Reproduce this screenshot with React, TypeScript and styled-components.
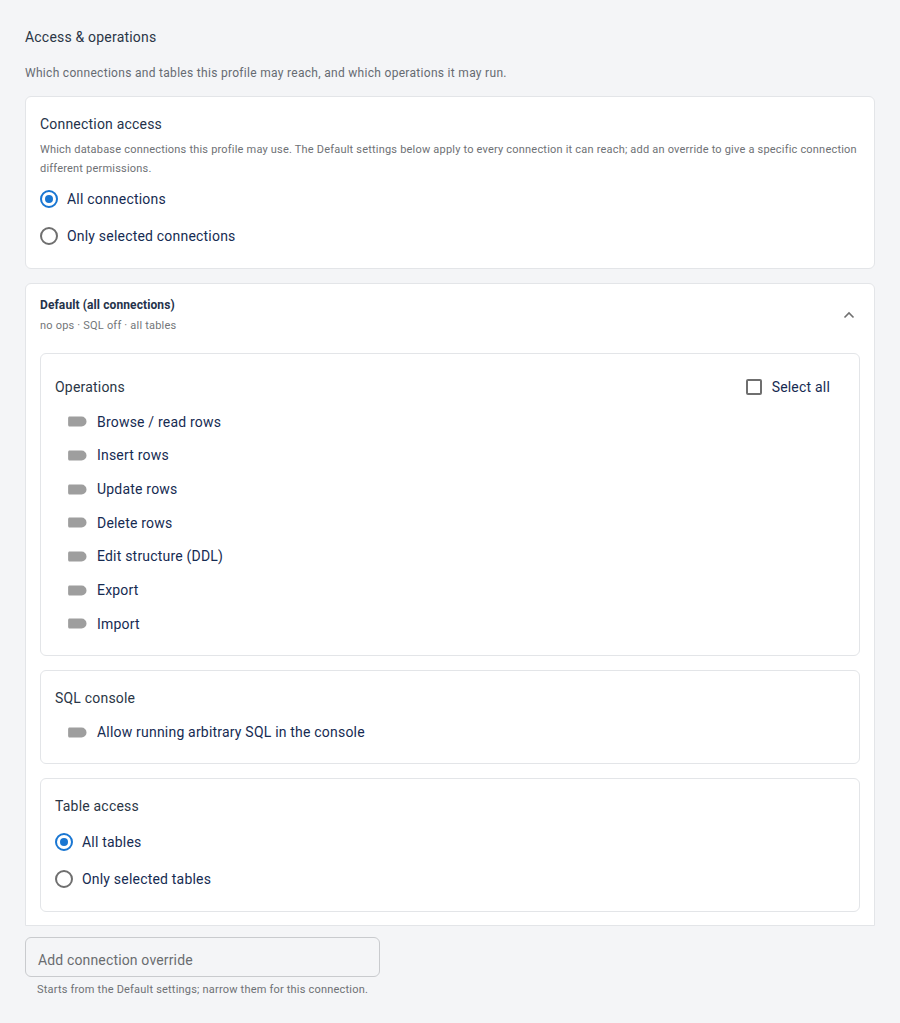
import React from "react";
import styled, { createGlobalStyle } from "styled-components";

const Global = createGlobalStyle`
  html, body { margin: 0; padding: 0; background: #f4f5f7; }
  body { font-family: Roboto, "Noto Sans", "Liberation Sans", sans-serif; -webkit-font-smoothing: antialiased; }
  * { box-sizing: border-box; }
`;

const Page = styled.div`
  padding: 27px 25px 26px 25px;
  width: 900px;
  min-height: 1023px;
`;

const Heading = styled.div`
  font-size: 14px;
  line-height: 20px;
  color: #2b3646;
  letter-spacing: 0.2px;
`;

const Sub = styled.div`
  margin-top: 17px;
  font-size: 12px;
  line-height: 18px;
  color: #666b72;
  letter-spacing: 0.3px;
`;

const Card = styled.div<{ $openBottom?: boolean }>`
  background: #fff;
  border: 1px solid #e3e5e8;
  border-radius: ${(p) => (p.$openBottom ? "6px 6px 0 0" : "6px")};
  width: 850px;
`;

const AccessCard = styled(Card)`
  margin-top: 14px;
  padding: 17px 14px 14px 14px;
`;

const CardTitle = styled.div`
  font-size: 14px;
  line-height: 20px;
  color: #25324a;
  letter-spacing: 0.2px;
`;

const Desc = styled.div`
  margin-top: 7px;
  font-size: 11px;
  line-height: 18.5px;
  color: #6e7175;
  letter-spacing: 0.2px;
`;

const RadioGroup = styled.div<{ $top: number }>`
  display: flex;
  flex-direction: column;
  margin-top: ${(p) => p.$top}px;
`;

const RadioRow = styled.label`
  display: flex;
  align-items: center;
  height: 37px;
  gap: 9px;
  cursor: pointer;
`;

const RadioCircle = styled.span<{ $on?: boolean }>`
  width: 18px;
  height: 18px;
  border-radius: 50%;
  border: 2px solid ${(p) => (p.$on ? "#1976d2" : "#6f6f6f")};
  display: flex;
  align-items: center;
  justify-content: center;
  flex-shrink: 0;
  &::after {
    content: "";
    width: 8px;
    height: 8px;
    border-radius: 50%;
    background: ${(p) => (p.$on ? "#1976d2" : "transparent")};
  }
`;

const OptionText = styled.span`
  font-size: 14px;
  line-height: 20px;
  color: #162b52;
  letter-spacing: 0.2px;
`;

const DefaultCard = styled(Card)`
  margin-top: 14px;
  padding-bottom: 13px;
`;

const DefaultHeader = styled.div`
  display: flex;
  align-items: center;
  justify-content: space-between;
  padding: 12px 18px 19px 14px;
`;

const HeaderTitle = styled.div`
  font-size: 12px;
  line-height: 18px;
  font-weight: 700;
  color: #25324a;
  letter-spacing: 0.1px;
`;

const HeaderSub = styled.div`
  margin-top: 4px;
  font-size: 11px;
  line-height: 16px;
  color: #737679;
  letter-spacing: 0.2px;
`;

const Body = styled.div`
  display: flex;
  flex-direction: column;
  gap: 14px;
  padding: 0 14px;
`;

const Panel = styled.div`
  border: 1px solid #e3e5e8;
  border-radius: 6px;
  padding: 15px 15px 14px 14px;
`;

const PanelHeader = styled.div`
  display: flex;
  align-items: center;
  justify-content: space-between;
  height: 36px;
`;

const PanelTitle = styled.div<{ $gap?: number }>`
  font-size: 14px;
  line-height: 24px;
  color: #2b3646;
  letter-spacing: 0.2px;
  margin-bottom: ${(p) => p.$gap ?? 0}px;
`;

const CheckLabel = styled.label`
  display: flex;
  align-items: center;
  gap: 10px;
  margin-right: 14px;
  cursor: pointer;
`;

const CheckBox = styled.span`
  width: 16px;
  height: 16px;
  border: 2px solid #6f6f6f;
  border-radius: 2px;
`;

const ToggleRow = styled.div`
  display: flex;
  align-items: center;
  height: 33.67px;
  padding-left: 13px;
  gap: 10px;
`;

const ToggleTrack = styled.svg`
  width: 19px;
  height: 11px;
  flex-shrink: 0;
`;

const InputBox = styled.div`
  margin-top: 11px;
  width: 355px;
  height: 40px;
  border: 1px solid #c9cbce;
  border-radius: 6px;
  display: flex;
  align-items: center;
  padding: 6px 0 0 12px;
  font-size: 14px;
  color: #6a6d70;
  letter-spacing: 0.15px;
`;

const Helper = styled.div`
  margin-top: 5px;
  padding-left: 12px;
  font-size: 11px;
  line-height: 16px;
  color: #6e7175;
  letter-spacing: 0.2px;
`;

const Toggle = ({ label }: { label: string }) => (
  <ToggleRow>
    <ToggleTrack viewBox="0 0 19 11">
      <path d="M0.9 0.5 H13.5 A5 5 0 0 1 13.5 10.5 H0.9 L0.1 9.3 V1.7 Z" fill="#9e9e9e" />
    </ToggleTrack>
    <OptionText>{label}</OptionText>
  </ToggleRow>
);

const Radio = ({ label, on }: { label: string; on?: boolean }) => (
  <RadioRow>
    <RadioCircle $on={on} />
    <OptionText>{label}</OptionText>
  </RadioRow>
);

const ops = [
  "Browse / read rows",
  "Insert rows",
  "Update rows",
  "Delete rows",
  "Edit structure (DDL)",
  "Export",
  "Import",
];

export default function App() {
  return (
    <>
      <Global />
      <Page>
        <Heading>Access &amp; operations</Heading>
        <Sub>Which connections and tables this profile may reach, and which operations it may run.</Sub>

        <AccessCard>
          <CardTitle>Connection access</CardTitle>
          <Desc>
            Which database connections this profile may use. The Default settings below apply to every connection it
            can reach; add an override to give a specific connection different permissions.
          </Desc>
          <RadioGroup $top={2}>
            <Radio label="All connections" on />
            <Radio label="Only selected connections" />
          </RadioGroup>
        </AccessCard>

        <DefaultCard $openBottom>
          <DefaultHeader>
            <div>
              <HeaderTitle>Default (all connections)</HeaderTitle>
              <HeaderSub>no ops · SQL off · all tables</HeaderSub>
            </div>
            <svg width="14" height="14" viewBox="0 0 14 14">
              <path d="M2.5 9.5 L7 5 L11.5 9.5" fill="none" stroke="#707070" strokeWidth="1.6" />
            </svg>
          </DefaultHeader>
          <Body>
            <Panel>
              <PanelHeader>
                <PanelTitle>Operations</PanelTitle>
                <CheckLabel>
                  <CheckBox />
                  <OptionText>Select all</OptionText>
                </CheckLabel>
              </PanelHeader>
              {ops.map((o) => (
                <Toggle key={o} label={o} />
              ))}
            </Panel>
            <Panel>
              <PanelTitle $gap={6}>SQL console</PanelTitle>
              <Toggle label="Allow running arbitrary SQL in the console" />
            </Panel>
            <Panel>
              <PanelTitle>Table access</PanelTitle>
              <RadioGroup $top={5}>
                <Radio label="All tables" on />
                <Radio label="Only selected tables" />
              </RadioGroup>
            </Panel>
          </Body>
        </DefaultCard>

        <InputBox>Add connection override</InputBox>
        <Helper>Starts from the Default settings; narrow them for this connection.</Helper>
      </Page>
    </>
  );
}
